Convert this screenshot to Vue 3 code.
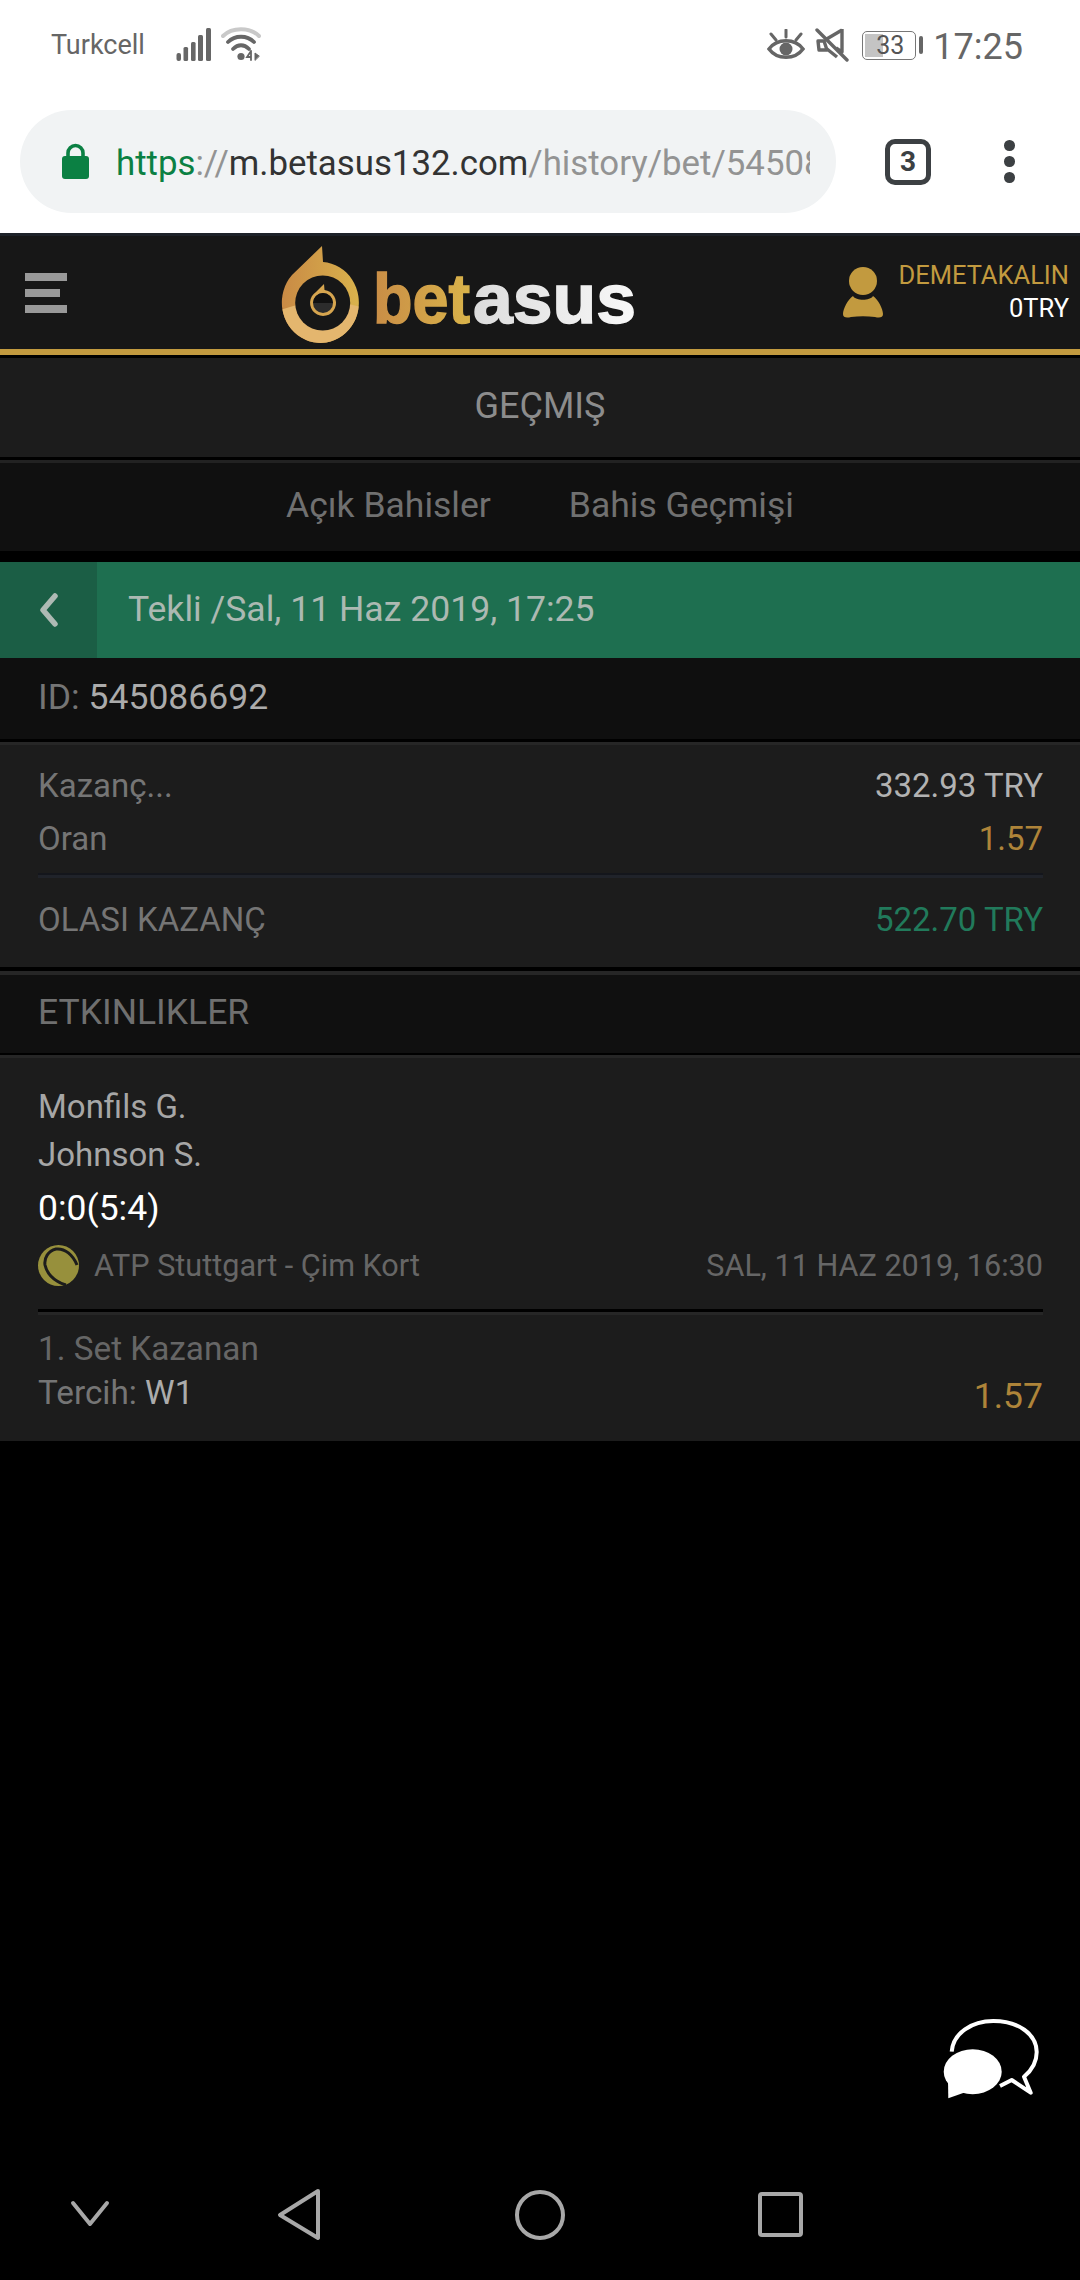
<script setup>
const summary = [
  { label: 'Kazanç...', value: '332.93 TRY', tone: 'plain' },
  { label: 'Oran', value: '1.57', tone: 'gold' }
]
</script>

<template>
  <div class="screen">
    <header class="chrome">
      <div class="status">
        <span class="carrier">Turkcell</span>
        <svg class="signal" width="35" height="34" viewBox="0 0 35 34" fill="#666">
          <rect x="0.5" y="25" width="4.5" height="8" rx="2"/>
          <rect x="7.5" y="19" width="4.6" height="14" rx="1.5"/>
          <rect x="15" y="14" width="4.6" height="19" rx="1.5"/>
          <rect x="22" y="7" width="5" height="26" rx="1.5"/>
          <rect x="30" y="0" width="5" height="33" rx="1.5"/>
        </svg>
        <svg class="wifi" width="40" height="36" viewBox="0 0 40 36" fill="none" stroke-linecap="round">
          <path d="M2 9C11 0 29 0 38 9" stroke="#c9c9c9" stroke-width="4"/>
          <path d="M7 15C14 8 26 8 33 15" stroke="#666" stroke-width="3.8"/>
          <path d="M12 22C17 17 23 17 28 22" stroke="#666" stroke-width="3.8"/>
          <circle cx="20" cy="29.5" r="3.6" fill="#666"/>
          <path d="M30 24v9M30 24l-4 6h4" stroke="#666" stroke-width="1.8"/>
          <path d="M34 33v-7l4 3z" fill="#666" stroke="#666" stroke-width="1"/>
        </svg>
        <span class="status-space"></span>
        <svg class="eye" width="38" height="32" viewBox="0 0 38 32" fill="none" stroke="#666" stroke-width="3.5">
          <path d="M2 20C10 9 28 9 36 20C28 31 10 31 2 20Z"/>
          <circle cx="19" cy="20" r="6.5" fill="#666" stroke="none"/>
          <path d="M19 1v7M4 5l5 6M34 5l-5 6" stroke-linecap="round" stroke-width="3"/>
        </svg>
        <svg class="mute" width="34" height="34" viewBox="0 0 34 34" fill="none" stroke="#666">
          <path d="M3 13h6l3 9H4z M27 1v23l-6-4" stroke-width="3.4" stroke-linejoin="round"/>
          <path d="M10 12l17-10" stroke-width="3.4"/>
          <path d="M12 21l10 8" stroke-width="3.4"/>
          <path d="M2 2L32 32" stroke-width="3.4" stroke-linecap="round"/>
        </svg>
        <div class="battery">
          <div class="battery-body">
            <span class="battery-fill"></span>
            <span class="battery-text">33</span>
          </div>
          <span class="battery-nub"></span>
        </div>
        <span class="clock">17:25</span>
      </div>

      <div class="urlbar">
        <div class="pill">
          <svg class="lock" width="27" height="36" viewBox="0 0 27 36">
            <path d="M6 15V10a7.5 7.5 0 0 1 15 0v5" fill="none" stroke="#0b8043" stroke-width="3.6"/>
            <rect x="0" y="13" width="27" height="23" rx="3" fill="#0b8043"/>
          </svg>
          <div class="url"><span class="scheme">https</span><span class="faint">://</span><span class="host">m.betasus132.com</span><span class="faint">/history/bet/54508</span></div>
        </div>
        <div class="tabs-count">3</div>
        <div class="kebab"><i></i><i></i><i></i></div>
      </div>
    </header>

    <div class="site-head">
      <div class="burger"><i></i><i class="short"></i><i></i></div>
      <svg class="logo" width="380" height="108" viewBox="0 0 380 108">
        <defs>
          <linearGradient id="goldGrad" x1="0" x2="1" y1="0" y2="0">
            <stop offset="0" stop-color="#c98a45"/>
            <stop offset="1" stop-color="#d9b24c"/>
          </linearGradient>
          <linearGradient id="betGrad" gradientUnits="userSpaceOnUse" x1="103" x2="200" y1="0" y2="0">
            <stop offset="0" stop-color="#c98d46"/>
            <stop offset="1" stop-color="#d9b34a"/>
          </linearGradient>
          <linearGradient id="asusGrad" gradientUnits="userSpaceOnUse" x1="203" x2="366" y1="0" y2="0">
            <stop offset="0" stop-color="#dcdcdc"/>
            <stop offset="1" stop-color="#f8f8f8"/>
          </linearGradient>
          <clipPath id="dropClip">
            <path d="M52 6L53 22A38.5 40.5 0 1 1 22 35Z"/>
          </clipPath>
        </defs>
        <path d="M52 6L53 22A38.5 40.5 0 1 1 22 35Z" fill="url(#goldGrad)"/>
        <path d="M8 71Q50 54 94 68V106H8Z" fill="#e4b66e" clip-path="url(#dropClip)"/>
        <circle cx="52.7" cy="63" r="27.5" fill="#171717"/>
        <path d="M54 44L54.5 50A13 13 0 1 1 46 52Z" fill="#d6a54f"/>
        <circle cx="53" cy="63" r="10" fill="#2c2c2c"/>
        <path d="M43 63a10 10 0 0 1 20 0z" fill="#111"/>
        <text x="103" y="83" class="wordmark" fill="url(#betGrad)" stroke="url(#betGrad)" textLength="97" lengthAdjust="spacingAndGlyphs">bet</text>
        <text x="203" y="83" class="wordmark" fill="url(#asusGrad)" stroke="url(#asusGrad)" textLength="163" lengthAdjust="spacingAndGlyphs">asus</text>
      </svg>
      <div class="user">
        <svg class="user-icon" width="40" height="52" viewBox="0 0 40 52" fill="#c29a3f">
          <circle cx="20" cy="14" r="14"/>
          <path d="M10 29C13 34 27 34 30 29C35 32 40 42 40 47C40 51 36 51 32 50C24 49 16 49 8 50C4 51 0 51 0 47C0 42 5 32 10 29Z"/>
        </svg>
        <div class="user-lines">
          <div class="user-name">DEMETAKALIN</div>
          <div class="user-bal">0TRY</div>
        </div>
      </div>
    </div>
    <div class="gold-rule"></div>

    <div class="page-title">GEÇMIŞ</div>

    <nav class="subnav">
      <span>Açık Bahisler</span>
      <span>Bahis Geçmişi</span>
    </nav>

    <div class="green-bar">
      <div class="back">
        <svg width="18" height="34" viewBox="0 0 18 34" fill="none" stroke="#aebab4" stroke-width="5.5" stroke-linecap="round" stroke-linejoin="round">
          <path d="M15 3L3 17L15 31"/>
        </svg>
      </div>
      <div class="green-title">Tekli /Sal, 11 Haz 2019, 17:25</div>
    </div>

    <div class="id-row"><span class="dim">ID:</span> <span class="id-val">545086692</span></div>

    <section class="summary">
      <div v-for="row in summary" :key="row.label" class="kv">
        <span class="dim">{{ row.label }}</span>
        <span :class="row.tone">{{ row.value }}</span>
      </div>
      <div class="soft-rule"></div>
      <div class="kv">
        <span class="dim">OLASI KAZANÇ</span>
        <span class="green">522.70 TRY</span>
      </div>
    </section>

    <div class="section-head">ETKINLIKLER</div>

    <section class="event">
      <div class="team">Monfils G.</div>
      <div class="team">Johnson S.</div>
      <div class="score">0:0(5:4)</div>
      <div class="league-row">
        <svg class="ball" width="41" height="41" viewBox="0 0 41 41">
          <circle cx="20.5" cy="20.5" r="20.5" fill="#97903c"/>
          <path d="M39 20C35 10 27 3 18 4C10 6 6 13 7 20C9 28 14 33 19 36C22 38 24 39 28 40" fill="none" stroke="#1c1c1c" stroke-width="3"/>
        </svg>
        <span class="league">ATP Stuttgart - Çim Kort</span>
        <span class="date">SAL, 11 HAZ 2019, 16:30</span>
      </div>
      <div class="hard-rule"></div>
      <div class="market">1. Set Kazanan</div>
      <div class="pick">
        <span><span class="dim">Tercih:</span> <span class="pick-val">W1</span></span>
        <span class="gold pick-odd">1.57</span>
      </div>
    </section>

    <svg class="chat" width="100" height="90" viewBox="0 0 100 90">
      <path d="M11.7 36.7C13 18 32 6 53.3 6C78 6 96.7 19 96.7 37C96.7 47 91 56 84 61.7L90.7 77.7L71.7 65L60 71" fill="none" stroke="#fff" stroke-width="4" stroke-linejoin="round"/>
      <ellipse cx="32.7" cy="56.7" rx="29" ry="22.5" fill="#fff"/>
      <path d="M8 64L8.3 83.3L26 77Z" fill="#fff"/>
    </svg>

    <footer class="nav">
      <svg class="nav-svg" width="1080" height="70" viewBox="0 0 1080 70" fill="none" stroke="#a8a8a8" stroke-width="4" stroke-linecap="round" stroke-linejoin="round">
        <path d="M73 15L90 36L107 15"/>
        <path d="M318 3L280 27L318 50Z"/>
        <circle cx="540" cy="27" r="23"/>
        <rect x="760" y="6" width="41" height="41" rx="2"/>
      </svg>
    </footer>
  </div>
</template>

<style>
html, body { margin: 0; background: #000; }
</style>

<style scoped>
.screen {
  position: relative;
  width: 1080px;
  height: 2280px;
  background: #000;
  font-family: Roboto, "Liberation Sans", sans-serif;
  overflow: hidden;
  display: flex;
  flex-direction: column;
}
.chrome { background: #fff; height: 233px; }
.status {
  height: 90px;
  display: flex;
  align-items: center;
  color: #666;
  padding-right: 57px;
}
.carrier { font-size: 27px; margin-left: 51px; width: 125px; }
.signal { margin-top: -1px; }
.wifi { margin-left: 10px; }
.status-space { flex: 1; }
.eye { margin-top: -1px; }
.mute { margin-left: 10px; margin-top: -1px; }
.battery { margin-left: 13px; display: flex; align-items: center; gap: 3px; }
.battery-body {
  position: relative;
  box-sizing: border-box;
  width: 54px;
  height: 29px;
  border: 1.5px solid #777;
  border-radius: 5px;
  display: flex;
  align-items: center;
  justify-content: center;
}
.battery-fill { position: absolute; left: 2px; top: 2px; bottom: 2px; width: 18px; background: #c4c4c4; }
.battery-text { position: relative; font-size: 25px; color: #555; left: 1px; }
.battery-nub { width: 4px; height: 18px; background: #666; border-radius: 2px; }
.clock { font-size: 36px; margin-left: 10px; padding-top: 3px; }

.urlbar { height: 143px; display: flex; align-items: center; }
.pill {
  box-sizing: border-box;
  width: 816px;
  height: 103px;
  margin-left: 20px;
  border-radius: 52px;
  background: #f1f3f4;
  display: flex;
  align-items: center;
  padding-left: 42px;
}
.lock { flex: none; margin-top: -1px; }
.url {
  margin-left: 27px;
  width: 694px;
  overflow: hidden;
  white-space: nowrap;
  font-size: 34.8px;
  padding-top: 2px;
}
.scheme { color: #0b8043; }
.host { color: #333; }
.faint { color: #939393; }
.tabs-count {
  box-sizing: border-box;
  margin-left: 49px;
  width: 46px;
  height: 46px;
  border: 5px solid #3c4043;
  border-radius: 10px;
  display: flex;
  align-items: center;
  justify-content: center;
  font-size: 28px;
  font-weight: 700;
  color: #3c4043;
}
.kebab { margin-left: 73px; display: flex; flex-direction: column; gap: 5.5px; }
.kebab i { display: block; width: 10.5px; height: 10.5px; border-radius: 50%; background: #3c4043; }

.site-head {
  box-sizing: border-box;
  height: 116px;
  background: #171717;
  border-top: 3px solid #1e2229;
  display: flex;
  align-items: flex-start;
  position: relative;
}
.burger { margin: 37px 0 0 25px; width: 42px; display: flex; flex-direction: column; gap: 8px; flex: none; }
.burger i { display: block; height: 8px; background: #999; }
.burger i.short { width: 35px; }
.logo { margin: 4px 0 0 203px; flex: none; }
.wordmark { font-family: "Liberation Sans", sans-serif; font-weight: 700; font-size: 71px; stroke-width: 1.5; stroke-linejoin: miter; }
.user { position: absolute; right: 11px; top: 23px; display: flex; align-items: flex-start; }
.user-icon { margin-top: 8px; margin-right: 15px; flex: none; }
.user-lines { text-align: right; font-size: 25.5px; line-height: 33px; }
.user-name { color: #c29a3f; }
.user-bal { color: #fff; }
.gold-rule { height: 6px; background: #c29a3f; }
.page-title {
  margin-top: 3px;
  box-sizing: border-box;
  height: 99px;
  background: #1c1c1c;
  display: flex;
  align-items: center;
  justify-content: center;
  color: #8c8c8c;
  font-size: 36px;
  padding-bottom: 4px;
}
.subnav {
  margin-top: 3px;
  box-sizing: border-box;
  height: 91px;
  background: #101010;
  border-top: 3px solid #222;
  display: flex;
  align-items: center;
  justify-content: center;
  gap: 78px;
  color: #707070;
  font-size: 35.5px;
  padding-bottom: 4px;
}
.green-bar {
  margin-top: 11px;
  height: 96px;
  background: #1e6f50;
  display: flex;
  align-items: center;
  flex: none;
}
.back {
  width: 97px;
  height: 96px;
  background: #1b5e45;
  display: flex;
  align-items: center;
  justify-content: center;
}
.green-title { margin-left: 31px; font-size: 35.6px; color: #acb9b2; padding-bottom: 2px; }
.id-row {
  box-sizing: border-box;
  height: 81px;
  background: #0f0f0f;
  padding: 0 38px 3px;
  display: flex;
  align-items: center;
  gap: 9px;
  font-size: 35.5px;
  flex: none;
}
.dim { color: #757575; }
.id-val { color: #ababab; }
.summary {
  margin-top: 3px;
  box-sizing: border-box;
  height: 225px;
  border-top: 3px solid #262626;
  background: #1c1c1c;
  padding: 13.5px 37px 0 38px;
  flex: none;
}
.kv {
  display: flex;
  justify-content: space-between;
  line-height: 53px;
  font-size: 33px;
}
.plain { color: #b2b2b2; }
.gold { color: #ae8439; }
.green { color: #217a5b; }
.soft-rule { height: 2px; background: #14161c; border-bottom: 3px solid #20232a; margin: 8.5px 0 14.5px; }
.section-head {
  margin-top: 4px;
  box-sizing: border-box;
  height: 82px;
  background: #101010;
  border-top: 4px solid #262626;
  padding: 0 38px 5px;
  display: flex;
  align-items: center;
  color: #6f6f6f;
  font-size: 35.5px;
  flex: none;
}
.event {
  margin-top: 2px;
  box-sizing: border-box;
  height: 386px;
  border-top: 3px solid #262626;
  background: #1c1c1c;
  padding: 25px 37px 0 38px;
  flex: none;
}
.team { font-size: 33px; line-height: 48px; color: #a6a6a6; }
.score { font-size: 35.5px; line-height: 58px; color: #fff; margin-bottom: 5px; }
.league-row { display: flex; align-items: center; height: 46px; color: #666; font-size: 30.6px; }
.ball { flex: none; }
.league { margin-left: 15px; }
.date { margin-left: auto; }
.hard-rule { height: 3px; margin-top: 21px; background: #000; border-bottom: 3px solid #262626; }
.market { margin-top: 12px; font-size: 33.3px; line-height: 44px; color: #666; }
.pick { display: flex; justify-content: space-between; font-size: 33.3px; line-height: 44px; }
.pick-val { color: #ababab; }
.pick-odd { font-size: 35.5px; padding-top: 3px; }

.chat { position: absolute; left: 940px; top: 2015px; }
.nav { position: absolute; left: 0; top: 2188px; width: 1080px; height: 70px; }
.nav-svg { display: block; }
</style>
